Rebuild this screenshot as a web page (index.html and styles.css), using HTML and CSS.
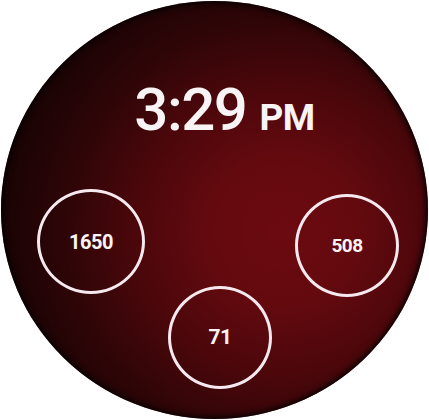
FILE: index.html
```html
<!DOCTYPE html>
<html>
<head>
<meta charset="utf-8">
<link rel="stylesheet" href="styles.css">
</head>
<body>
<div class="face">
  <div class="time">
    <span class="clock">3:29</span>
    <span class="ampm">PM</span>
  </div>
  <div class="complications">
    <div class="comp comp-left"><span>1650</span></div>
    <div class="comp comp-bottom"><span>71</span></div>
    <div class="comp comp-right"><span>508</span></div>
  </div>
</div>
</body>
</html>
```

FILE: styles.css
```css
html, body {
  margin: 0;
  padding: 0;
  background: #ffffff;
}
body {
  width: 429px;
  height: 420px;
  overflow: hidden;
  font-family: Roboto, "Liberation Sans", sans-serif;
}
.face {
  box-sizing: border-box;
  width: 427px;
  height: 418px;
  margin: 1px;
  border-radius: 50%;
  background: radial-gradient(ellipse 85% 85% at 66% 55%, #6c0a10 0%, #640a0f 20%, #4c070b 40%, #2e0507 60%, #170304 80%, #0c0203 100%);
  box-shadow: inset 0 0 6px 2px #050101;
  padding-top: 79px;
  color: #f8f4f5;
  display: flex;
  flex-direction: column;
}
.time {
  display: flex;
  justify-content: center;
  align-items: baseline;
  gap: 13px;
  line-height: 1;
  padding-left: 20px;
}
.clock {
  font-size: 60px;
  font-weight: 500;
  letter-spacing: -1.5px;
}
.ampm {
  font-size: 37px;
  font-weight: 700;
  letter-spacing: -0.5px;
}
.complications {
  display: grid;
  grid-template-columns: 108px 1fr 104px;
  padding: 0 29px 0 36px;
  margin-top: 49px;
}
.comp {
  grid-row: 1;
  box-sizing: border-box;
  border: 3px solid #f5e9ef;
  border-radius: 50%;
  display: flex;
  align-items: center;
  justify-content: center;
  font-weight: 700;
  font-size: 20px;
  letter-spacing: -0.5px;
}
.comp-left {
  grid-column: 1;
  width: 108px;
  height: 105px;
}
.comp-right {
  grid-column: 3;
  width: 104px;
  height: 103px;
  margin-top: 5px;
  font-size: 19px;
}
.comp-bottom {
  grid-column: 2;
  justify-self: center;
  width: 104px;
  height: 103px;
  margin-top: 97px;
  font-size: 21px;
}
.comp span {
  display: block;
  line-height: 1;
}
```
